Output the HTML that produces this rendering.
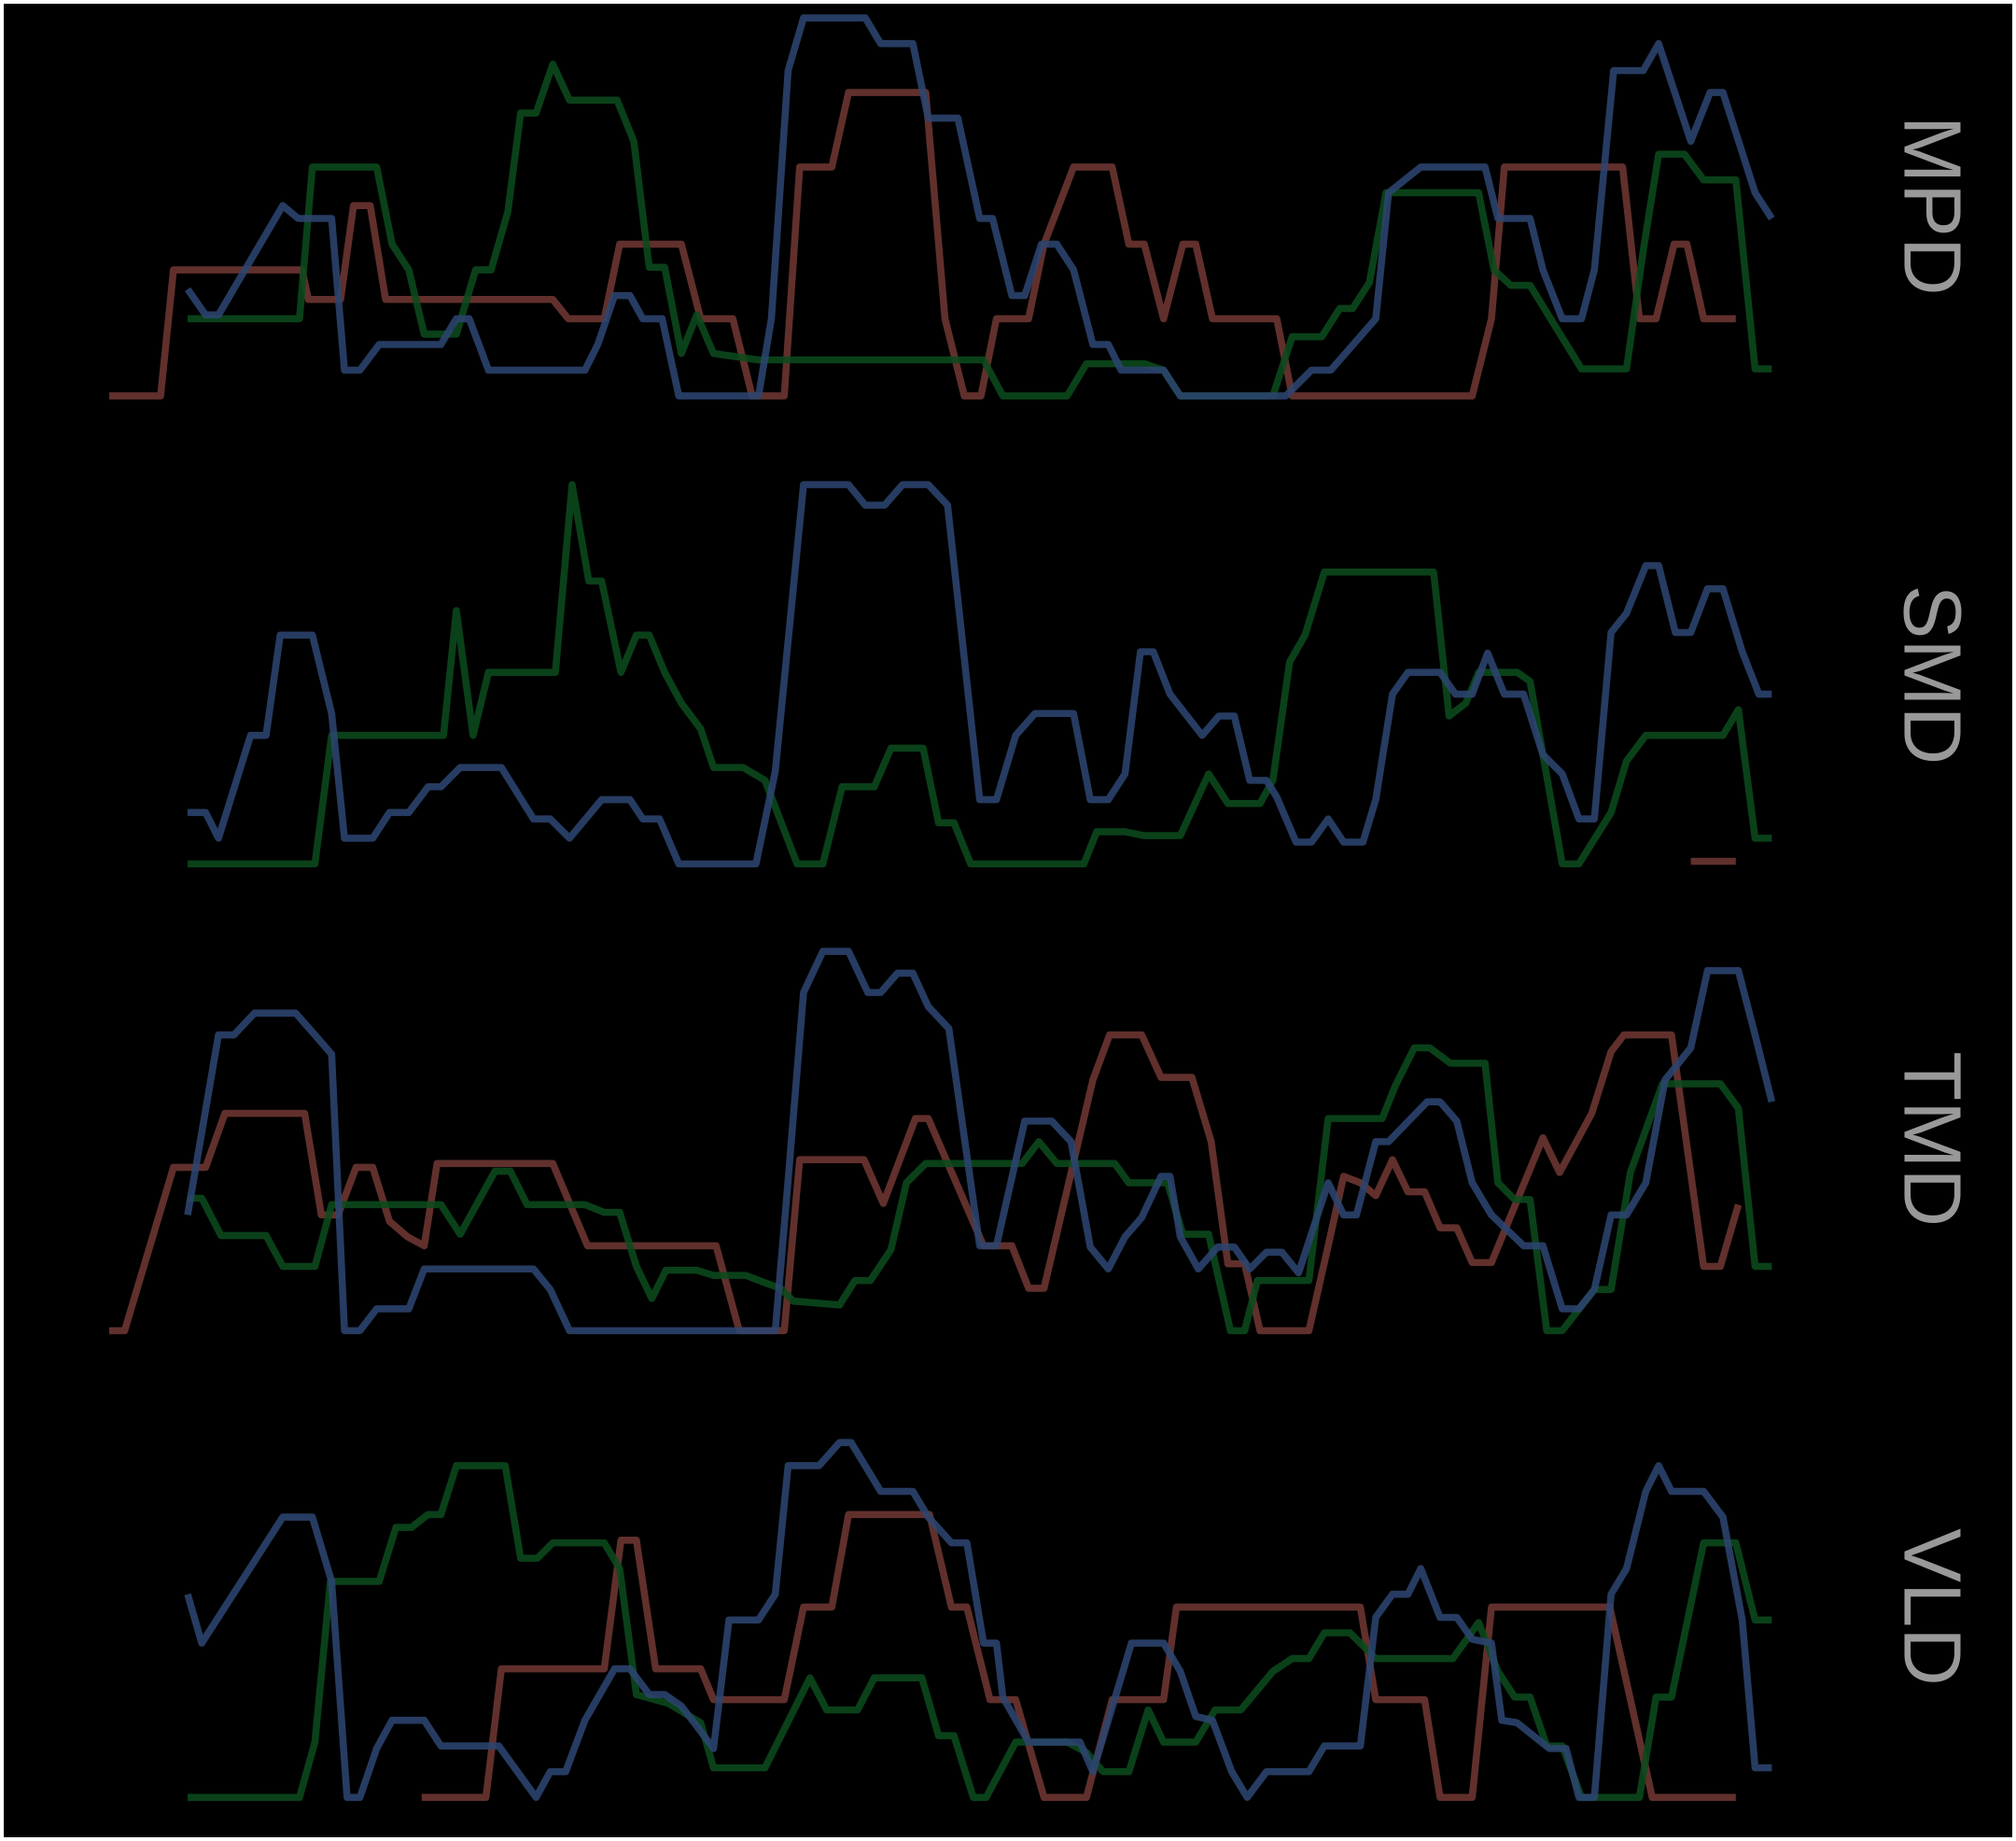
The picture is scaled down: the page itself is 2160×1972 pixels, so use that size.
<!DOCTYPE html>
<html><head><meta charset="utf-8"><style>
html,body{margin:0;padding:0;background:#fff;}
body{width:2160px;height:1972px;overflow:hidden;}
svg{display:block;position:absolute;left:4px;top:4px;width:2152px;height:1964px;background:#000;}
polyline{fill:none;stroke-width:5.5;stroke-linejoin:round;stroke-linecap:butt;opacity:.88}
.r{stroke:#6e3732}.b{stroke:#2c4470}.g{stroke:#0b4a1c}
text{font-family:"Liberation Sans",sans-serif;font-size:63px;fill:#999}
</style></head><body>
<svg viewBox="3 3 1562 1426" preserveAspectRatio="none" xmlns="http://www.w3.org/2000/svg">
<polyline class="r" points="85,308 125,308 135,210 235,210 240,233 265,233 275,160 288,160 300,233 430,233 442,248 470,248 482,190 530,190 545,248 570,248 585,308 610,308 622,130 647,130 660,72 720,72 735,248 750,308 763,308 775,248 800,248 812,190 835,130 865,130 878,190 890,190 905,248 920,190 930,190 943,248 993,248 1005,308 1145,308 1160,248 1170,130 1262,130 1275,248 1288,248 1302,190 1312,190 1325,248 1350,248"/>
<polyline class="g" points="146,248 233,248 243,130 293,130 305,190 318,210 330,260 355,260 370,210 382,210 395,165 405,88 417,88 430,50 443,78 480,78 493,110 505,208 517,208 530,275 542,245 555,275 590,280 765,280 780,308 830,308 845,283 890,283 905,288 918,308 990,308 1005,262 1028,262 1042,240 1052,240 1065,220 1078,150 1150,150 1162,210 1175,222 1190,222 1230,287 1265,287 1278,195 1290,120 1310,120 1325,140 1350,140 1365,287 1378,287"/>
<polyline class="b" points="146,225 160,245 170,245 220,160 232,170 258,170 268,288 280,288 295,268 343,268 355,248 365,248 380,288 455,288 465,268 478,230 490,230 500,248 515,248 528,308 590,308 600,248 613,55 625,14 673,14 685,34 710,34 722,92 745,92 762,170 772,170 787,230 797,230 810,190 822,190 835,210 850,268 862,268 872,288 905,288 918,308 1000,308 1020,288 1035,288 1070,248 1080,150 1105,130 1155,130 1165,170 1190,170 1200,210 1215,248 1230,248 1240,210 1255,55 1278,55 1290,34 1315,110 1330,72 1340,72 1365,150 1378,170"/>

<polyline class="g" points="146,672 245,672 258,572 345,572 355,475 368,572 380,523 432,523 445,377 458,452 468,452 483,523 495,494 505,494 517,523 530,547 545,567 555,597 578,597 595,607 620,672 640,672 655,612 680,612 693,582 718,582 730,640 742,640 755,672 843,672 853,647 875,647 890,650 918,650 940,602 955,625 980,625 990,607 1003,515 1015,494 1030,445 1115,445 1127,557 1140,547 1150,523 1180,523 1190,530 1215,672 1228,672 1253,632 1265,592 1280,572 1340,572 1352,552 1365,652 1378,652"/>
<polyline class="r" points="1315,670 1350,670"/>
<polyline class="b" points="146,632 160,632 170,652 195,572 207,572 218,494 243,494 258,555 268,652 290,652 303,632 318,632 333,612 343,612 358,597 390,597 415,637 428,637 443,652 468,622 490,622 500,637 513,637 528,672 588,672 603,600 625,377 660,377 673,393 688,393 702,377 722,377 737,393 762,622 775,622 790,572 805,555 835,555 848,622 862,622 875,602 887,507 897,507 910,540 935,572 948,557 960,557 972,607 985,607 993,620 1008,655 1020,655 1033,637 1045,655 1060,655 1070,622 1083,540 1095,523 1120,523 1132,540 1145,540 1157,508 1170,540 1185,540 1200,587 1215,602 1228,637 1240,637 1253,492 1265,477 1280,440 1290,440 1303,492 1315,492 1328,458 1340,458 1355,507 1368,540 1378,540"/>

<polyline class="r" points="85,1035 97,1035 135,908 160,908 175,866 237,866 250,945 263,945 277,908 290,908 303,950 317,962 330,969 340,905 430,905 457,969 557,969 575,1035 610,1035 622,902 672,902 687,936 712,870 722,870 765,969 787,969 800,1002 812,1002 850,840 863,805 888,805 903,838 927,838 942,888 955,983 968,983 980,1035 1018,1035 1033,969 1045,915 1058,920 1070,930 1083,902 1095,927 1108,927 1120,955 1133,955 1145,982 1160,982 1200,885 1213,912 1238,866 1253,818 1263,805 1300,805 1325,985 1338,985 1352,937"/>
<polyline class="g" points="146,932 157,932 172,961 207,961 220,985 245,985 258,937 343,937 358,960 385,911 397,911 410,937 455,937 470,943 482,943 495,985 507,1010 518,988 542,988 555,992 580,992 593,997 607,1002 617,1012 653,1015 665,996 677,996 693,972 705,920 720,905 795,905 808,888 822,905 867,905 878,920 908,920 920,960 940,960 957,1035 968,1035 978,996 1018,996 1033,870 1075,870 1085,845 1100,815 1112,815 1128,827 1155,827 1165,920 1178,933 1190,933 1203,1035 1215,1035 1240,1003 1253,1003 1268,912 1293,843 1338,843 1352,862 1365,985 1378,985"/>
<polyline class="b" points="146,945 170,805 182,805 198,788 230,788 245,805 258,820 268,1035 280,1035 293,1018 318,1018 330,987 415,987 428,1003 443,1035 603,1035 613,918 625,772 640,740 660,740 675,772 685,772 698,757 710,757 722,783 738,800 762,969 775,969 797,872 818,872 833,888 848,970 862,987 875,962 888,947 903,915 910,915 918,962 932,987 947,970 960,970 972,987 985,974 997,974 1010,990 1033,920 1045,945 1055,945 1070,888 1080,888 1110,857 1120,857 1133,872 1145,920 1160,945 1185,969 1200,969 1215,1018 1228,1018 1240,1003 1253,945 1265,945 1280,920 1295,840 1315,815 1328,755 1352,755 1365,805 1378,857"/>

<polyline class="r" points="328,1398 378,1398 390,1298 470,1298 483,1198 495,1198 510,1298 545,1298 555,1322 610,1322 625,1250 647,1250 660,1178 723,1178 740,1250 752,1250 770,1322 790,1322 812,1398 845,1398 865,1322 905,1322 915,1250 1058,1250 1070,1322 1108,1322 1120,1398 1145,1398 1160,1250 1252,1250 1285,1398 1350,1398"/>
<polyline class="g" points="146,1398 233,1398 245,1355 257,1230 295,1230 308,1188 320,1188 333,1178 343,1178 355,1140 393,1140 405,1212 418,1212 430,1200 470,1200 482,1220 495,1318 520,1325 545,1340 555,1375 595,1375 630,1305 643,1330 667,1330 680,1305 717,1305 730,1350 742,1350 757,1398 767,1398 790,1355 830,1355 845,1363 858,1378 878,1378 893,1330 905,1355 930,1355 945,1330 965,1330 990,1300 1005,1290 1018,1290 1030,1270 1050,1270 1070,1290 1130,1290 1150,1262 1165,1300 1178,1320 1190,1320 1203,1358 1215,1358 1230,1398 1275,1398 1288,1320 1300,1320 1325,1200 1350,1200 1365,1260 1378,1260"/>
<polyline class="b" points="146,1240 157,1278 220,1180 243,1180 258,1230 270,1398 280,1398 293,1360 305,1338 330,1338 343,1358 388,1358 417,1398 428,1378 440,1378 455,1338 478,1298 490,1298 505,1318 517,1318 530,1327 540,1340 555,1360 567,1260 590,1260 603,1240 613,1140 637,1140 653,1122 662,1122 685,1160 710,1160 722,1180 740,1200 752,1200 765,1278 775,1278 780,1320 800,1355 840,1355 850,1378 880,1278 905,1278 918,1300 930,1335 943,1338 958,1378 970,1398 985,1378 1018,1378 1030,1358 1058,1358 1070,1258 1083,1240 1095,1240 1105,1220 1120,1258 1133,1258 1145,1275 1160,1278 1168,1338 1180,1340 1205,1360 1218,1360 1228,1398 1240,1398 1253,1240 1265,1220 1280,1160 1290,1140 1300,1160 1325,1160 1340,1180 1355,1260 1365,1375 1378,1375"/>

<text transform="translate(1481,160) rotate(90)" text-anchor="middle">MPD</text>
<text transform="translate(1481,525) rotate(90)" text-anchor="middle">SMD</text>
<text transform="translate(1481,886) rotate(90)" text-anchor="middle">TMD</text>
<text transform="translate(1481,1250) rotate(90)" text-anchor="middle">VLD</text>
</svg>
</body></html>
